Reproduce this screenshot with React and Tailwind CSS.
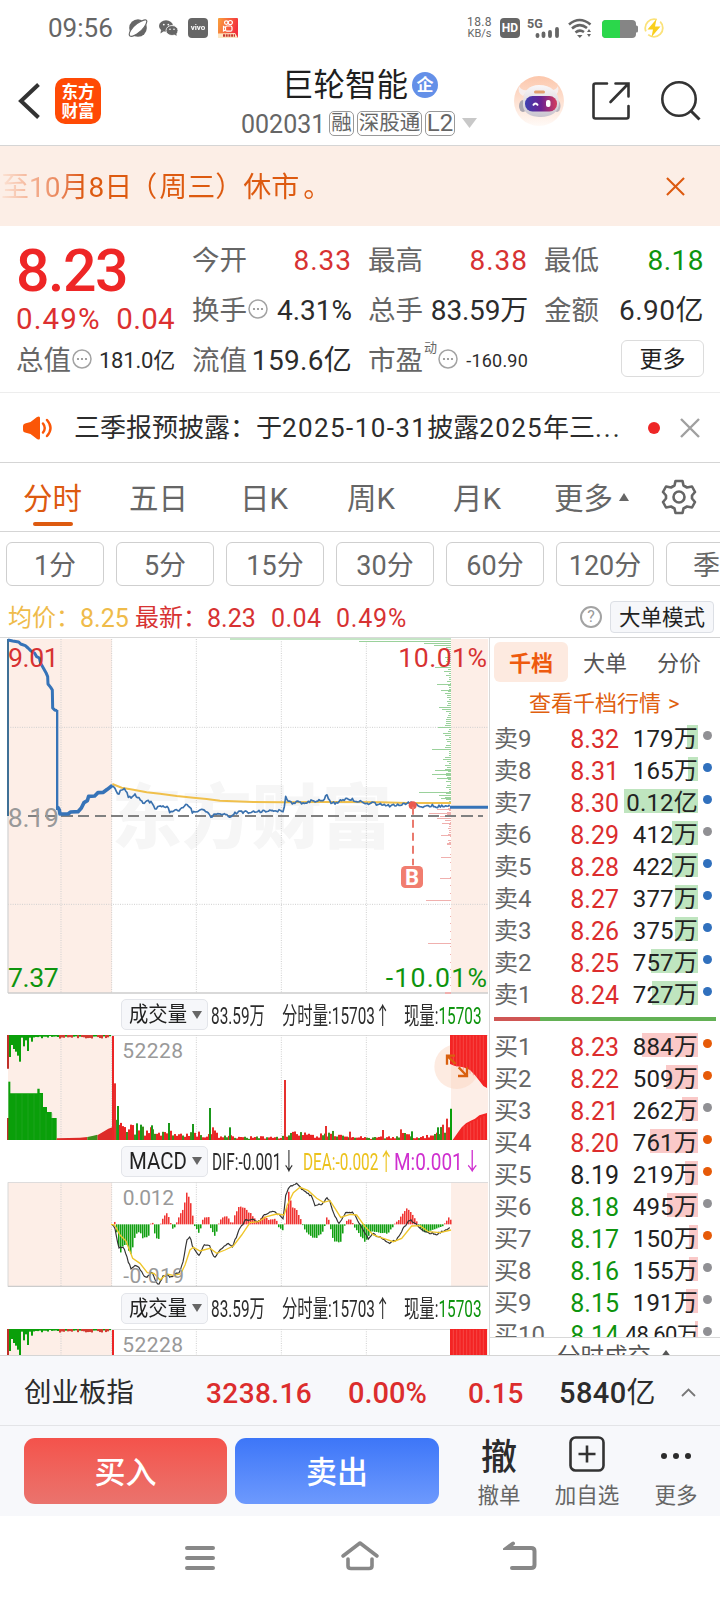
import React from 'react';
import clsx from 'clsx';

const SELL = [
  ['卖9', '8.32', '179万', 11, 'gray'],
  ['卖8', '8.31', '165万', 10, 'blue'],
  ['卖7', '8.30', '0.12亿', 74, 'blue'],
  ['卖6', '8.29', '412万', 26, 'gray'],
  ['卖5', '8.28', '422万', 26, 'blue'],
  ['卖4', '8.27', '377万', 23, 'blue'],
  ['卖3', '8.26', '375万', 23, 'blue'],
  ['卖2', '8.25', '757万', 47, 'blue'],
  ['卖1', '8.24', '727万', 46, 'blue'],
];

const BUY = [
  ['买1', '8.23', '884万', 56, 'orange'],
  ['买2', '8.22', '509万', 32, 'orange'],
  ['买3', '8.21', '262万', 16, 'gray'],
  ['买4', '8.20', '761万', 48, 'orange'],
  ['买5', '8.19', '219万', 13, 'orange'],
  ['买6', '8.18', '495万', 31, 'gray'],
  ['买7', '8.17', '150万', 9, 'orange'],
  ['买8', '8.16', '155万', 9, 'gray'],
  ['买9', '8.15', '191万', 12, 'gray'],
  ['买10', '8.14', '48.60万', 3, 'gray'],
];

const PERIODS = ['1分', '5分', '15分', '30分', '60分', '120分', '季K'];

const DOTS = { gray: 'bg-[#909094]', blue: 'bg-[#3070bd]', orange: 'bg-[#e65a08]' };

// deterministic jitter in 0..1
const noise = (i) => {
  const v = Math.sin(i * 12.9898 + 4.1) * 43758.5453;
  return v - Math.floor(v);
};

// linear interpolation over [x, y] knots
const at = (knots, x) => {
  for (let i = 1; i < knots.length; i++) {
    const [x0, y0] = knots[i - 1];
    const [x1, y1] = knots[i];
    if (x <= x1) return y0 + ((y1 - y0) * (x - x0)) / (x1 - x0);
  }
  return knots[knots.length - 1][1];
};

const wiggle = (knots, amp) => {
  const pts = [];
  for (let x = knots[0][0]; x <= knots[knots.length - 1][0]; x += 4) {
    pts.push(`${x},${(at(knots, x) + (noise(x) - 0.5) * amp).toFixed(1)}`);
  }
  return pts.join(' ');
};

const AUCTION =
  'M24,30 38,33 56,36 62,42 76,47 84,54 92,62 104,70 110,80 118,84 122,100 130,114 138,128 143,140 144,162 152,172 157,180 158,234 164,240 171,242';
const AUCTION_TAIL =
  'M172,530 178,540 180,552 204,552 212,546 234,545 244,534 252,518 262,512 266,499 284,498 294,488 310,487 322,478 337,466';

const PRICE = [
  [337, 464], [344, 472], [355, 497], [364, 480], [374, 480], [388, 504], [405, 494], [428, 516], [452, 514],
  [466, 536], [486, 526], [500, 530], [510, 545], [540, 540], [558, 519], [580, 549], [605, 540], [625, 548],
  [632, 562], [650, 553], [680, 552], [692, 562], [710, 547], [760, 547], [790, 542], [852, 542], [855, 496],
  [862, 510], [875, 521], [890, 514], [915, 520], [935, 513], [970, 512], [979, 495], [992, 516], [1005, 521],
  [1020, 510], [1045, 506], [1072, 512], [1095, 520], [1125, 520], [1160, 528], [1190, 526], [1215, 519],
  [1240, 521], [1270, 529], [1290, 526], [1310, 530], [1350, 529],
];

const AVERAGE =
  'M337,462 365,473 400,479 440,487 480,491 530,498 580,503 620,507 660,512 700,514 760,516 850,517 950,516 1060,516 1140,517 1220,519 1353,519';

const DIF = [
  [337, 193], [344, 200], [356, 265], [370, 262], [392, 325], [410, 315], [425, 335], [440, 355], [455, 335],
  [475, 378], [490, 345], [515, 350], [540, 335], [550, 300], [560, 240], [570, 232], [580, 265], [598, 288],
  [612, 256], [628, 255], [643, 297], [660, 270], [685, 248], [697, 262], [715, 215], [735, 182], [755, 178],
  [775, 186], [795, 162], [822, 153], [850, 175], [856, 110], [865, 85], [888, 69], [910, 90], [935, 110],
  [945, 135], [965, 134], [980, 115], [990, 122], [1000, 160], [1018, 190], [1035, 160], [1050, 155],
  [1065, 162], [1080, 195], [1105, 235], [1120, 222], [1145, 235], [1165, 250], [1190, 240], [1212, 200],
  [1230, 180], [1252, 195], [1275, 215], [1310, 223], [1350, 205],
];

const DEA =
  'M333,193 344,195 360,225 378,243 398,295 420,310 442,338 462,340 480,360 500,342 520,346 542,342 555,315 570,270 580,262 600,273 630,265 650,280 675,270 700,258 725,225 750,188 775,185 800,170 830,162 852,165 862,135 880,98 900,82 925,92 950,115 970,127 990,122 1005,145 1022,172 1050,163 1070,165 1095,200 1120,225 1150,235 1180,245 1205,235 1235,198 1260,197 1285,215 1320,218 1353,210';

const HIST = [
  [338, 0], [344, -8], [357, 94], [366, 68], [376, 60], [388, 94], [398, 62], [406, 28], [418, 22], [428, 46],
  [444, 36], [450, 0], [455, -8], [460, 20], [466, 44], [474, 44], [480, 0], [488, -20], [500, -36],
  [508, -10], [514, 14], [524, 6], [534, -20], [546, -44], [560, -112], [570, -66], [580, 0], [596, 28],
  [608, -22], [626, -20], [630, 10], [644, 38], [652, 4], [662, -18], [680, -26], [694, 4], [704, -36],
  [716, -56], [736, -48], [752, -30], [770, -6], [790, -26], [804, -12], [826, -16], [832, 6], [850, 20],
  [856, -40], [864, -106], [874, -50], [888, -44], [904, -4], [916, 22], [945, 46], [968, 20], [980, -30],
  [990, 14], [1000, 56], [1020, 52], [1034, -6], [1048, -18], [1060, 6], [1094, 56], [1112, 20], [1160, 28],
  [1180, 2], [1194, -12], [1218, -50], [1236, -30], [1250, -4], [1270, 26], [1300, 14], [1330, 2], [1346, -22],
  [1353, -6],
];

const VOLUME = [
  [348, 70], [362, 44], [380, 36], [410, 40], [440, 34], [460, 28], [480, 20], [520, 24], [545, 14], [560, 28],
  [600, 24], [620, 12], [640, 30], [665, 8], [690, 24], [700, 10], [840, 8], [850, 20], [900, 20], [940, 12],
  [970, 22], [990, 26], [1010, 13], [1050, 18], [1080, 9], [1190, 9], [1215, 26], [1230, 11], [1300, 16],
  [1340, 44], [1353, 4],
];

const SPIKES = [
  [345, 170, 'r'], [354, 102, 'g'], [411, 50, 'g'], [423, 46, 'g'], [456, 44, 'g'], [507, 51, 'g'],
  [579, 48, 'g'], [630, 96, 'g'], [639, 38, 'r'], [690, 38, 'g'], [855, 180, 'r'], [978, 42, 'r'],
  [1050, 25, 'r'], [1149, 30, 'r'], [1203, 32, 'r'], [1236, 26, 'g'], [1314, 38, 'g'], [1329, 46, 'r'],
  [1341, 64, 'r'],
];

// order-book depth ticks, [y, left edge]
const DEPTH = [
  [33, 1078], [40, 1272], [46, 1302], [111, 1306], [123, 1332], [162, 1310], [180, 1322], [233, 1317],
  [239, 1325], [292, 1314], [310, 1330], [357, 1296], [388, 1330], [422, 1305], [434, 1297], [446, 1310],
  [488, 1256], [496, 1318], [504, 1322],
];
const BID = [
  [537, 1310], [550, 1288], [558, 1320], [565, 1312], [572, 1334], [580, 1326], [616, 1324], [640, 1342],
  [681, 1322], [745, 1321], [810, 1279], [939, 1284],
];

function Grid({ top, bottom }) {
  return (
    <g stroke="#cfcfcf" strokeWidth="3" strokeDasharray="3 4">
      {[183, 335, 589, 844, 1099].map((x) => (
        <line key={x} x1={x} x2={x} y1={top} y2={bottom} />
      ))}
    </g>
  );
}

function PriceChart() {
  return (
    <svg className="block h-[357px] w-[489px]" viewBox="0 21 1467 1071" fontFamily="Roboto">
      <rect x="24" y="27" width="312" height="1062" fill="#fdeee7" />
      <rect x="1353" y="27" width="111" height="1062" fill="#fdeee7" />
      <text x="335" y="640" fontSize="210" fontWeight="900" fill="#f6f6f6" fontFamily="Noto Sans CJK SC" textLength="840">
        东方财富
      </text>
      <Grid top={27} bottom={1089} />
      <g stroke="#cfcfcf" strokeWidth="3" strokeDasharray="3 4">
        <line x1="24" x2="1464" y1="292" y2="292" />
        <line x1="24" x2="1464" y1="823" y2="823" />
      </g>
      <path d="M24,27 V1089" stroke="#d6d6d6" strokeWidth="4" />
      <path d="M24,1089 H1464" stroke="#cccccc" strokeWidth="5" />
      <path d="M0,22 H1467" stroke="#d2d2d2" strokeWidth="3" />
      <rect x="690" y="24" width="663" height="6" fill="#c5e5c6" />
      <g stroke="#9ad19b" strokeWidth="3" shapeRendering="crispEdges">
        {Array.from({ length: 80 }, (_, i) => (
          <line key={i} x1={1353 - 3 - noise(i) * 15} x2="1353" y1={40.5 + i * 6} y2={40.5 + i * 6} />
        ))}
        {DEPTH.map(([y, x]) => (
          <line key={y} x1={x} x2="1353" y1={y} y2={y} />
        ))}
      </g>
      <g stroke="#f0b0ae" strokeWidth="3" shapeRendering="crispEdges">
        {Array.from({ length: 20 }, (_, i) => (
          <line key={i} x1={1353 - 1 - noise(i + 90) * 11} x2="1353" y1={529.5 + i * 6} y2={529.5 + i * 6} />
        ))}
        {BID.map(([y, x]) => (
          <line key={y} x1={x} x2="1353" y1={y} y2={y} />
        ))}
        <path d="M1352,650 V1085" strokeDasharray="3 20" />
        <path d="M1335,1089 H1353" strokeWidth="5" />
      </g>
      <path d="M84,558 H1450" stroke="#808080" strokeWidth="6" strokeDasharray="34 16" shapeRendering="crispEdges" />
      <path d="M24,27 V558" stroke="#3f7096" strokeWidth="6" />
      <path d={AVERAGE} fill="none" stroke="#f0c04c" strokeWidth="6" />
      <path d={AUCTION} fill="none" stroke="#3673b8" strokeWidth="9" strokeLinejoin="round" />
      <path d="M171.500,240 V540" stroke="#3673b8" strokeWidth="7" />
      <path d={AUCTION_TAIL} fill="none" stroke="#3673b8" strokeWidth="11" strokeLinejoin="round" />
      <polyline points={wiggle(PRICE, 9)} fill="none" stroke="#3a71ae" strokeWidth="5" strokeLinejoin="round" />
      <path d="M1350,532 H1464" stroke="#3673b8" strokeWidth="9" />
      <circle cx="1238" cy="526" r="12" fill="#ea5a50" />
      <path d="M1239,530 V706" stroke="#ea7a6e" strokeWidth="6" strokeDasharray="24 15" />
      <rect x="1203" y="708" width="66" height="66" rx="13" fill="#f17d6f" />
      <text x="1236" y="764" fontSize="66" fontWeight="700" fill="#fff" textAnchor="middle">B</text>
      <g fontSize="80">
        <text x="24" y="110" fill="#d73232" textLength="152">9.01</text>
        <text x="1461" y="110" fill="#d73232" textAnchor="end" textLength="266">10.01%</text>
        <text x="23" y="590" fill="#999" textLength="154">8.19</text>
        <text x="24" y="1070" fill="#0e940e" textLength="152">7.37</text>
        <text x="1461" y="1070" fill="#0e940e" textAnchor="end" textLength="304">-10.01%</text>
      </g>
    </svg>
  );
}

function VolumeChart({ clipped = false }) {
  const bars = [];
  for (let x = 348; x < 1345; x += 6) {
    const h = at(VOLUME, x) * (0.35 + noise(x) * 0.95);
    bars.push(<rect key={x} x={x} y={450 - h} width="6" height={h} fill={noise(x + 7) > 0.68 ? '#3d8f1d' : '#ea2525'} />);
  }
  const hang = [];
  for (let i = 0; i < 51; i++) {
    const h = i < 6 ? [66, 30, 42, 50, 62, 80][i] : i < 12 ? [8, 34, 16, 48, 8, 20][i - 6] : 3 + noise(i) * 8;
    hang.push(<rect key={i} x={27 + i * 6} y="135" width="6" height={h} fill={i > 24 && noise(i) > 0.3 ? '#d23a30' : '#0a9f0a'} />);
  }
  return (
    <svg
      className={clsx('block w-[489px]', clipped ? 'h-[26px]' : 'h-[105px]')}
      viewBox={clipped ? '0 135 1467 78' : '0 135 1467 315'}
      fontFamily="Roboto"
    >
      <rect x="24" y="135" width="312" height="315" fill="#fdeee7" />
      <rect x="1353" y="135" width="111" height="315" fill="#fdeee7" />
      <Grid top={135} bottom={450} />
      <path d="M24,136 H1464" stroke="#d8d8d8" strokeWidth="3" />
      <path d="M24,450 H1464" stroke="#d8d8d8" strokeWidth="3" />
      <path d="M24,135 V236 M24,384 V450" stroke="#c0302a" strokeWidth="6" />
      <path d="M28,275 V450" stroke="#0a9f0a" strokeWidth="6" />
      {hang}
      <path d="M30,450 V310 H112 V296 H119 V309 H129 V351 H141 V366 H155 V384 H170 V450 Z" fill="#0a9f0a" />
      <g stroke="#44b044" strokeWidth="1">
        {[48, 66, 84, 102, 120, 138, 156].map((x) => (
          <line key={x} x1={x} x2={x} y1={x > 129 ? 370 : 312} y2="450" />
        ))}
      </g>
      <path d="M170,450 V445 L240,443 262,441 V450 Z M292,450 V436 L310,425 325,416 337,412 V450 Z" fill="#dd2b28" />
      <path d="M262,450 V441 L280,437 292,434 V450 Z" fill="#3d8f1d" />
      <path d="M339,138 V450" stroke="#ec2526" strokeWidth="6" />
      {bars}
      {SPIKES.map(([x, h, c]) => (
        <rect key={x} x={x - 3} y={450 - h} width="6" height={h} fill={c === 'r' ? '#e6302e' : '#1a981a'} />
      ))}
      <path d="M1353,356 V450" stroke="#0a9f0a" strokeWidth="6" />
      {!clipped && <circle cx="1370" cy="230" r="67" fill="#fbd3bc" opacity="0.45" />}
      <path d="M1350,135 H1461 V294 L1450,288 1438,272 1425,256 1410,240 1390,232 1365,228 1350,222 Z" fill="#f32424" />
      <path d="M1358,450 1372,430 1385,412 1398,400 1412,392 1425,386 1438,376 1461,369 V450 Z" fill="#f32424" />
      <g stroke="#f76b64" strokeWidth="1.5">
        {Array.from({ length: 10 }, (_, i) => (
          <line key={i} x1={1360 + i * 10} x2={1360 + i * 10} y1="137" y2={226 + i * 5} />
        ))}
        {Array.from({ length: 7 }, (_, i) => (
          <line key={i} x1={1392 + i * 10} x2={1392 + i * 10} y1={408 - i * 5} y2="450" />
        ))}
      </g>
      {!clipped && (
        <path d="M1341,224 V197 H1365 M1341,197 L1367,222 M1376,232 L1401,258 M1401,232 V258 H1374" fill="none" stroke="#d9600f" strokeWidth="7" />
      )}
      <text x="367" y="204" fontSize="63" fill="#999" textLength="182">52228</text>
    </svg>
  );
}

function MacdChart() {
  const bars = [];
  for (let x = 342; x < 1354; x += 6) {
    const raw = at(HIST, x);
    const h = Math.abs(raw) * (0.85 + noise(x) * 0.15) + 2;
    bars.push(
      <rect key={x} x={x} y={raw > 0 ? 193 : 193 - h} width="4.6" height={h} fill={raw > 0 ? '#12a012' : '#f03432'} />
    );
  }
  return (
    <svg className="block h-[105px] w-[489px]" viewBox="0 66 1467 315" fontFamily="Roboto">
      <rect x="24" y="67" width="312" height="313" fill="#fdeee7" />
      <rect x="1353" y="67" width="111" height="313" fill="#fdeee7" />
      <Grid top={67} bottom={380} />
      <path d="M24,67 H1464 M24,67 V380" fill="none" stroke="#d8d8d8" strokeWidth="3" />
      <path d="M24,379 H1464" stroke="#cccccc" strokeWidth="4" />
      {bars}
      <polyline points={wiggle(DIF, 6)} fill="none" stroke="#333" strokeWidth="3.5" />
      <path d={DEA} fill="none" stroke="#efc62a" strokeWidth="4" />
      <g fontSize="63" fill="#999">
        <text x="368" y="134" textLength="154">0.012</text>
        <text x="370" y="368" textLength="182">-0.019</text>
      </g>
    </svg>
  );
}

function More() {
  return (
    <svg className="-mt-1 size-5 shrink-0" viewBox="0 0 20 20">
      <circle cx="10" cy="10" r="9" fill="none" stroke="#a3a3a3" strokeWidth="1.5" />
      <circle cx="6" cy="10" r="1.1" fill="#8a8a8a" />
      <circle cx="10" cy="10" r="1.1" fill="#8a8a8a" />
      <circle cx="14" cy="10" r="1.1" fill="#8a8a8a" />
    </svg>
  );
}

function Triangle({ className, up = false }) {
  return (
    <svg className={className} viewBox="0 0 10 8" preserveAspectRatio="none">
      <path d={up ? 'M5 0 10 8H0Z' : 'M0 0H10L5 8Z'} fill="currentColor" />
    </svg>
  );
}

function IndicatorBar({ name, narrow = false, children }) {
  return (
    <div className="flex items-center pl-[121px]">
      <div className="flex h-[31px] w-[87px] shrink-0 items-center justify-between rounded-[5px] border border-[#e3e5ea] bg-[#f6f7fa] pl-[7px] pr-[5px]">
        <span className="w-[58px] whitespace-nowrap">
          <span
            className={clsx(
              'inline-block origin-left text-[#222]',
              narrow ? 'scale-x-[0.85] text-[24px]' : 'scale-x-[0.92] text-[21px]'
            )}
          >
            {name}
          </span>
        </span>
        <Triangle className="h-2 w-[10px] text-[#666]" />
      </div>
      {children}
    </div>
  );
}

function Narrow({ className, wide = false, children }) {
  return (
    <span className={clsx('shrink-0 whitespace-nowrap pt-0.5 text-[24px] text-[#2c2c2c]', className)}>
      <span className={clsx('inline-block origin-left', wide ? 'scale-x-[0.79]' : 'scale-x-[0.64]')}>{children}</span>
    </span>
  );
}

function VolumeBar() {
  return (
    <IndicatorBar name="成交量">
      <Narrow className="ml-[3px] w-[71px]">83.59万</Narrow>
      <Narrow className="w-[122px]">分时量:15703↑</Narrow>
      <Narrow className="w-[80px]">
        现量:<span className="text-[#0e940e]">15703</span>
      </Narrow>
    </IndicatorBar>
  );
}

function BookRow({ row, side }) {
  const [label, price, amount, width, dot] = row;
  const tone = price > '8.19' ? 'text-[#dc2d2d]' : price < '8.19' ? 'text-[#0e940e]' : 'text-[#222]';
  return (
    <div className="flex h-8 shrink-0 items-center pl-1">
      <span className="w-[53px] whitespace-nowrap pt-1 text-[24px] text-[#666]">{label}</span>
      <span className={clsx('w-[72px] pt-1 text-right text-[25px]', tone)}>{price}</span>
      <span className="relative flex h-6 w-[79px] items-center justify-end">
        <span
          className={clsx('absolute inset-y-0 right-0', side === 'sell' ? 'bg-[#bfe5bf]' : 'bg-[#fac9c8]')}
          style={{ width }}
        />
        <span
          className={clsx(
            'relative whitespace-nowrap pt-1 text-[#222]',
            amount.length > 5 ? 'text-[22px] tracking-[-0.7px]' : 'text-[24px] tracking-[0.2px]'
          )}
        >
          {amount}
        </span>
      </span>
      <span className={clsx('mb-1 ml-[5px] size-[9px] rounded-full', DOTS[dot])} />
    </div>
  );
}

function OrderBook() {
  return (
    <div className="flex h-[718px] w-[231px] flex-col overflow-hidden border-l border-[#d8d8d8] border-t border-t-[#d2d2d2]">
      <div className="ml-1 mt-1 flex h-10 items-center text-[22px] text-[#555]">
        <span className="flex h-10 w-[74px] items-center justify-center rounded-md bg-[#fdeae0] pt-1 font-bold text-[#ee5a0e]">千档</span>
        <span className="w-[74px] pt-1 text-center">大单</span>
        <span className="w-[74px] pt-1 text-center">分价</span>
      </div>
      <div className="flex h-[39px] items-center pl-[39px] pt-1 text-[22px] text-[#e0600f]">
        查看千档行情<span className="ml-[7px]">&gt;</span>
      </div>
      {SELL.map((row) => (
        <BookRow key={row[0]} row={row} side="sell" />
      ))}
      <div className="mb-2 ml-1 mt-2 flex h-1 w-[222px] shrink-0 bg-[#63b155]">
        <div className="w-[46px] bg-[#cf5654]" />
      </div>
      <div className="flex h-[308px] shrink-0 flex-col overflow-hidden">
        {BUY.map((row) => (
          <BookRow key={row[0]} row={row} side="buy" />
        ))}
      </div>
      <div className="flex h-[18px] shrink-0 items-start gap-[9px] overflow-hidden border-t border-[#d8d8d8] pl-[67px] pt-[8px] text-[23.500px] leading-none text-[#555]">
        分时成交
        <Triangle up className="mt-1 h-2 w-[12px]" />
      </div>
    </div>
  );
}

function StatusBar() {
  return (
    <div className="flex h-[56px] items-center pl-[48px] text-[#666]">
      <span className="w-[80px] text-[26px]">09:56</span>
      <svg className="mr-[11px] size-5" viewBox="0 0 20 20">
        <circle cx="10" cy="10" r="8.8" fill="#666" />
        <ellipse cx="10" cy="10" rx="11" ry="4.2" transform="rotate(-42 10 10)" fill="#fff" />
        <path d="M2 18C-.5 16 4 9 9 5.500S19 .5 18.800 3.500 15 11.500 11 14.500 3.500 19 2 18Z" fill="none" stroke="#666" strokeWidth="1.200" />
      </svg>
      <svg className="mr-[10px] h-4 w-[19px]" viewBox="0 0 19 16">
        <ellipse cx="7" cy="6" rx="7" ry="5.800" fill="#666" />
        <path d="M2 10 1.500 13.500 5 11Z" fill="#666" />
        <ellipse cx="13" cy="10.500" rx="6" ry="5" fill="#666" stroke="#fff" strokeWidth="0.800" />
        <path d="M15 14 17.500 16V13Z" fill="#666" />
        <g fill="#fff">
          <circle cx="4.800" cy="4.600" r="0.900" />
          <circle cx="9.300" cy="4.600" r="0.900" />
          <circle cx="11" cy="9.300" r="0.800" />
          <circle cx="15" cy="9.300" r="0.800" />
        </g>
      </svg>
      <span className="mr-[10px] flex size-5 items-center justify-center rounded-[4px] bg-[#666] text-[8px] font-bold leading-none text-white">
        <span className="scale-y-[0.8]">vivo</span>
      </span>
      <svg className="size-5" viewBox="0 0 20 20">
        <defs>
          <linearGradient id="ks" x1="0" y1="0" x2="1" y2="0.300">
            <stop offset="0" stopColor="#f9a23c" />
            <stop offset="1" stopColor="#f4313e" />
          </linearGradient>
        </defs>
        <rect width="20" height="20" rx="1" fill="url(#ks)" />
        <g fill="none" stroke="#fff" strokeWidth="1.200">
          <circle cx="8.300" cy="4.600" r="1.800" />
          <circle cx="12.300" cy="4.600" r="2.100" />
          <rect x="7.500" y="8" width="6.500" height="5.200" rx="1.500" />
          <path d="M7.500 9.500 5.500 8.500V13L7.500 12" />
        </g>
        <path d="M0 15.500 17 15 20 20H0Z" fill="#fde6c4" />
        <path d="M5 17.500H17" stroke="#c7372c" strokeWidth="2.500" strokeDasharray="2 0.700" />
      </svg>
      <div className="ml-[226px] flex w-[31px] flex-col items-center text-[12px] leading-[11px]">
        <span className="tracking-[0.4px]">18.8</span>
        <span className="text-[11px]">KB/s</span>
      </div>
      <span className="ml-[5px] flex size-5 items-center justify-center rounded-[4px] bg-[#666] text-[12px] font-bold leading-none text-white">HD</span>
      <svg className="ml-[7px] h-5 w-[34px] overflow-visible" viewBox="0 0 34 20" fontFamily="Roboto">
        <text x="0" y="9.500" fontSize="12.500" fontWeight="700" fill="#666">5G</text>
        <g stroke="#666" strokeWidth="3.800" strokeLinecap="round">
          <path d="M10.500 17V18M16.500 15.500V18M23 14V18M30 11V18" />
        </g>
      </svg>
      <svg className="ml-[7px] h-5 w-6" viewBox="0 0 24 20" fill="none" stroke="#666" strokeWidth="2.600">
        <path d="M1 6.500Q11.500-2.500 22.500 6.500M4 10.500Q11.500 4 19 10M7.500 14.500Q11.500 11 16 14" />
        <path d="M9 17 11.800 20 14.500 17Z" fill="#666" stroke="none" />
        <path d="M19 14 21 11 23 14ZM19 16 21 19 23 16Z" fill="#666" stroke="none" />
      </svg>
      <svg className="ml-[10px] mt-0.5 h-[18px] w-9" viewBox="0 0 36 18">
        <rect x="32" y="5.500" width="4" height="7" rx="1.500" fill="#858585" />
        <rect width="34" height="18" rx="4" fill="#858585" />
        <path d="M4 0H18V18H4A4 4 0 0 1 0 14V4A4 4 0 0 1 4 0Z" fill="#2bd74b" />
      </svg>
      <svg className="ml-[6px] size-5" viewBox="0 0 20 20">
        <circle cx="10" cy="10" r="8.800" fill="none" stroke="#fbe27a" strokeWidth="1.800" strokeDasharray="20 4" />
        <path d="M12.500 1 3.500 11.500H9L7.500 19 16.500 8.500H11Z" fill="#f9cf1c" />
      </svg>
    </div>
  );
}

function Tag({ className, children }) {
  return (
    <span className={clsx('flex h-[25px] shrink-0 items-center justify-center rounded-[5px] border-[1.5px] border-[#999] leading-none', className)}>
      {children}
    </span>
  );
}

function Header() {
  return (
    <div className="flex h-[90px] items-center border-b border-[#d5d5d5]">
      <svg className="ml-[18px] mt-px h-9 w-[22px]" viewBox="0 0 22 36" fill="none" stroke="#333" strokeWidth="4">
        <path d="M20.500 1.500 3 18 20.500 34.500" />
      </svg>
      <div className="ml-[15px] flex size-[46px] flex-col items-center justify-center rounded-[10px] bg-[#ff4a05] pt-0.5 text-[16.500px] font-bold leading-[19px] text-white">
        <span>东方</span>
        <span>财富</span>
      </div>
      <div className="ml-[135px] flex w-[245px] flex-col items-center pt-[5px]">
        <div className="ml-[3px] flex items-center">
          <span className="text-[31.500px] leading-[40px] text-[#1f1f1f]">巨轮智能</span>
          <span className="mb-[2px] ml-[4px] flex size-[26px] items-center justify-center rounded-full bg-[#6490e8] text-[17px] font-bold leading-none text-white">企</span>
        </div>
        <div className="ml-[10px] flex h-[34px] w-full items-center gap-[3px] text-[20.500px] text-[#666]">
          <span className="mr-px w-[84px] pt-0.5 text-[25px]">002031</span>
          <Tag className="w-[25px]">融</Tag>
          <Tag className="w-[65px]">深股通</Tag>
          <Tag className="w-[30px] text-[24px]">L2</Tag>
          <Triangle className="ml-[4px] h-[10px] w-[15px] shrink-0 text-[#c8c8c8]" />
        </div>
      </div>
      <svg className="ml-[33px] size-[50px]" viewBox="0 0 50 50">
        <defs>
          <linearGradient id="halo" x1="0" y1="0" x2="0" y2="1">
            <stop offset="0" stopColor="#fcc7ac" />
            <stop offset="1" stopColor="#fffaf7" />
          </linearGradient>
          <linearGradient id="shell" x1="0" y1="0" x2="0" y2="1">
            <stop offset="0" stopColor="#faf7f8" />
            <stop offset="1" stopColor="#c9c5cf" />
          </linearGradient>
          <linearGradient id="visor" x1="0" y1="0" x2="1" y2="0">
            <stop offset="0" stopColor="#3c3fb0" />
            <stop offset="0.500" stopColor="#6a2292" />
            <stop offset="1" stopColor="#d43b5c" />
          </linearGradient>
        </defs>
        <circle cx="25" cy="25" r="25" fill="url(#halo)" />
        <path d="M9 20Q3 17 5 10 7 15 14 14ZM40 20Q46 17 44 10 42 15 35 14Z" fill="#f6eeee" />
        <ellipse cx="9" cy="30" rx="4" ry="6" fill="#aaa6b0" />
        <ellipse cx="43" cy="30" rx="3.500" ry="6" fill="#b9b5be" />
        <path d="M25 9C37 9 45 16 45 27 45 36 37 41 27 41S8 37 9 27C9 15 15 9 25 9Z" fill="url(#shell)" />
        <rect x="20" y="14.500" width="11" height="3" rx="1.500" fill="#e2a070" />
        <rect x="11" y="20" width="32" height="15.500" rx="7.500" fill="url(#visor)" />
        <path d="M19 29.500Q21.500 25.500 24 29.500" fill="none" stroke="#fff" strokeWidth="1.800" />
        <rect x="32" y="24" width="4.500" height="7" rx="2" fill="#fff" />
      </svg>
      <svg className="ml-7 size-[38px]" viewBox="0 0 38 38" fill="none" stroke="#333" strokeWidth="2.600" strokeLinecap="round">
        <path d="M15 1.500H3.500Q1.500 1.500 1.500 3.500V34.500Q1.500 36.500 3.500 36.500H34.500Q36.500 36.500 36.500 34.500V24M23.500 1.500H36.500V14.500M36 2 18.500 20" />
      </svg>
      <svg className="ml-[31px] size-[40px]" viewBox="0 0 40 40" fill="none" stroke="#333" strokeWidth="2.600">
        <circle cx="18" cy="18" r="16.700" />
        <path d="M29.500 29.500 38.500 38.500" strokeWidth="3" />
      </svg>
    </div>
  );
}

function Cross({ className, color, width }) {
  return (
    <svg className={className} viewBox="0 0 20 20" stroke={color} strokeWidth={width}>
      <path d="M1 1 19 19M19 1 1 19" />
    </svg>
  );
}

function Stat({ label, value, tone = 'text-[#2c2c2c]', more = false }) {
  return (
    <div className="flex h-[50px] items-center justify-between pt-1">
      <span className="flex items-center gap-px whitespace-nowrap text-[27.500px] text-[#666]">
        {label}
        {more && <More />}
      </span>
      <span className={clsx('whitespace-nowrap', tone)}>{value}</span>
    </div>
  );
}

function Quote() {
  return (
    <div className="flex h-[167px] border-b border-[#ededed] pl-[16px] pr-[15px] pt-2 text-[28px]">
      <div className="w-[159px]">
        <div className="flex h-[70px] items-center pt-[3px] text-[59px] font-medium tracking-[-1.5px] text-[#ee2626]">8.23</div>
        <div className="flex h-[30px] items-center justify-between pt-0.5 text-[29.500px] text-[#dc3030]">
          <span className="tracking-[1.1px]">0.49%</span>
          <span className="tracking-[0.3px]">0.04</span>
        </div>
        <Stat label="总值" more value="181.0亿" tone="text-[#2c2c2c] text-[22px] tracking-[-0.2px]" />
      </div>
      <div className="ml-[17px] w-[160px]">
        <Stat label="今开" value="8.33" tone="text-[#d73232] tracking-[1px]" />
        <Stat label="换手" more value="4.31%" />
        <Stat label="流值" value="159.6亿" tone="text-[#2c2c2c] tracking-[0.3px]" />
      </div>
      <div className="ml-[16px] w-[160px]">
        <Stat label="最高" value="8.38" tone="text-[#d73232] tracking-[1px]" />
        <Stat label="总手" value="83.59万" tone="text-[#2c2c2c] tracking-[-0.2px]" />
        <Stat
          label={
            <>
              市盈<span className="mb-7 text-[13px]">动</span>
            </>
          }
          more
          value="-160.90"
          tone="text-[#2c2c2c] text-[18px] tracking-[0.2px]"
        />
      </div>
      <div className="ml-[16px] w-[160px]">
        <Stat label="最低" value="8.18" tone="text-[#0e940e] tracking-[0.5px]" />
        <Stat label="金额" value="6.90亿" tone="text-[#2c2c2c] tracking-[0.5px]" />
        <div className="ml-auto mt-[6px] flex h-[37px] w-[83px] items-center justify-center rounded-md border border-[#dcdcdc] pt-0.5 text-[23px] text-[#222]">更多</div>
      </div>
    </div>
  );
}

function Tabs() {
  return (
    <div className="flex h-[69px] items-center border-b border-[#d5d5d5] pl-[23px] text-[29.500px] text-[#666]">
      <span className="flex h-full w-[106px] flex-col pt-[22px] text-[#dd5a10]">
        分时
        <span className="ml-[10px] mt-[7px] h-1 w-10 rounded-full bg-[#dd5a10]" />
      </span>
      <span className="w-[111px] pt-1.5">五日</span>
      <span className="w-[107px] pt-1.5">日K</span>
      <span className="w-[106px] pt-1.5">周K</span>
      <span className="w-[101px] pt-1.5">月K</span>
      <span className="w-[59px] whitespace-nowrap pt-1.5">更多</span>
      <Triangle up className="ml-[6px] h-2 w-[10px]" />
      <svg className="ml-[32px] size-[36px]" viewBox="0 0 36 36" fill="none" stroke="#666" strokeWidth="2.600" strokeLinejoin="round">
        <path d="M14.500 2H21.500L22.500 6.500 26 8.500 31 7.500 34 13 31 16.500V19.500L34 23 31 28.500 26 27.500 22.500 29.500 21.500 34H14.500L13.500 29.500 10 27.500 5 28.500 2 23 5 19.500V16.500L2 13 5 7.500 10 8.500 13.500 6.500Z" />
        <circle cx="18" cy="18" r="5.500" />
      </svg>
    </div>
  );
}

function Footer() {
  return (
    <div className="h-[161px] border-t border-[#d5d5d5] bg-[#f7f8fb]">
      <div className="flex h-[70px] items-center border-b border-[#e3e4e7] pl-6 pt-1 text-[28px] font-medium text-[#dc2d2d]">
        <span className="w-[182px] text-[27.500px] font-normal text-[#2c2c2c]">创业板指</span>
        <span className="w-[142px] pt-0.5 tracking-[0.4px]">3238.16</span>
        <span className="w-[120px] pt-0.5 text-[29px]">0.00%</span>
        <span className="w-[91px] pt-0.5">0.15</span>
        <span className="w-[122px] whitespace-nowrap pt-0.5 text-[29px] tracking-[0.4px] text-[#2c2c2c]">5840<span className="font-normal">亿</span></span>
        <svg className="h-[9px] w-[15px]" viewBox="0 0 15 9" fill="none" stroke="#777" strokeWidth="1.800">
          <path d="M1 8 7.500 1.500 14 8" />
        </svg>
      </div>
      <div className="flex pl-6 pt-3">
        <div className="flex h-[66px] w-[203px] items-center justify-center rounded-[11px] bg-linear-to-b from-[#f4524b] to-[#ea736d] pt-0.5 text-[31px] font-medium text-white">买入</div>
        <div className="ml-2 flex h-[66px] w-[204px] items-center justify-center rounded-[11px] bg-linear-to-b from-[#3d76f8] to-[#6d99fd] pt-0.5 text-[31px] font-medium text-white">卖出</div>
        <div className="ml-[26px] flex text-[21.500px] leading-none text-[#666]">
          <div className="flex w-[68px] flex-col items-center">
            <span className="flex h-[47px] items-center pb-2 text-[36px] font-medium leading-none text-[#2c2c2c]">撤</span>
            <span>撤单</span>
          </div>
          <div className="flex w-[108px] flex-col items-center">
            <svg className="mb-[13px] mt-[-2px] size-9" viewBox="0 0 36 36" fill="none" stroke="#333" strokeWidth="2.600">
              <rect x="1.500" y="1.500" width="33" height="33" rx="5" />
              <path d="M18 9.500V26.500M9.500 18H26.500" />
            </svg>
            <span>加自选</span>
          </div>
          <div className="flex w-[70px] flex-col items-center">
            <svg className="mb-[13px] mt-[-2px] h-9 w-[32px]" viewBox="0 0 32 36" fill="#2c2c2c">
              <circle cx="4" cy="20" r="3" />
              <circle cx="16" cy="20" r="3" />
              <circle cx="28" cy="20" r="3" />
            </svg>
            <span>更多</span>
          </div>
        </div>
      </div>
    </div>
  );
}

function NavBar() {
  return (
    <div className="flex h-[84px] items-start pl-[184px] pt-6">
      <svg className="h-8 w-8" viewBox="0 0 32 32" stroke="#888" strokeWidth="4" strokeLinecap="round">
        <path d="M3 8H29M3 18H29M3 28H29" />
      </svg>
      <svg className="ml-[124px] h-8 w-10" viewBox="0 0 40 32" fill="none" stroke="#888" strokeWidth="3.600" strokeLinecap="round" strokeLinejoin="round">
        <path d="M3 16 20 3 37 16M8 19V26Q8 28.500 11 28.500H29Q32 28.500 32 26V19" />
      </svg>
      <svg className="ml-[123px] h-8 w-9" viewBox="0 0 36 32" fill="none" stroke="#888" strokeWidth="4" strokeLinecap="round">
        <path d="M10 3.500 4 8H28Q31.500 8 31.500 11V25Q31.500 28 28 28H9" />
      </svg>
    </div>
  );
}

export default function App() {
  return (
    <div className="h-[1600px] w-[720px] overflow-hidden bg-white font-['Roboto','Noto_Sans_CJK_SC',sans-serif] leading-none">
      <StatusBar />
      <Header />

      {/* Market notice */}
      <div className="flex h-20 items-center justify-between bg-[#fceee6] pl-px pr-[35px] text-[28px]">
        <span className="whitespace-nowrap bg-linear-to-r from-[#fbe3d5] via-[#dd5a10] via-25% to-[#dd5a10] bg-clip-text pt-1 leading-[40px] text-transparent">
          至10月8日<span className="-ml-[3px] mr-[2px]">（</span>周三<span>）</span>休市
          <span className="ml-[4px]">。</span>
        </span>
        <Cross className="size-[19px]" color="#dd5a10" width="2.200" />
      </div>

      <Quote />

      {/* Announcement */}
      <div className="flex h-[70px] items-center border-b border-[#d5d5d5] pl-[22px]">
        <svg className="h-6 w-[31px]" viewBox="0 0 31 24">
          <path d="M3 7.500 8.500 6 15 1Q18 -.5 18 2V22Q18 24.500 15 23L8.500 18 3 16.500Q1 16 1 14V10Q1 8 3 7.500Z" fill="#fb5607" />
          <path d="M21 7.500Q24.500 12 21 16.500M25 4Q32 12 25 20" fill="none" stroke="#fb5607" strokeWidth="2.400" strokeLinecap="round" />
        </svg>
        <span className="ml-[21px] w-[574px] whitespace-nowrap text-[26px] text-[#2c2c2c]">
          三季报预披露：于<span className="tracking-[1.4px]">2025-10-31</span>披露
          <span className="tracking-[1.3px]">2025</span>年三<span className="tracking-[2px]">...</span>
        </span>
        <span className="size-3 rounded-full bg-[#ee2626]" />
        <Cross className="ml-5 size-[20px]" color="#a0a0a0" width="2.400" />
      </div>

      <Tabs />

      <div className="flex h-[60px] items-center gap-3 overflow-hidden pl-[6px] pt-[3px] text-[27px] text-[#666]">
        {PERIODS.map((p) => (
          <span key={p} className="flex h-11 w-[98px] shrink-0 items-center justify-center rounded-md border border-[#cfcfcf] pt-1.5">
            {p}
          </span>
        ))}
      </div>

      <div className="flex h-[45px] items-center whitespace-nowrap pl-[8px] pt-[5px] text-[24px] text-[#d73232]">
        <span className="w-[72px] pt-0.5 text-[#efbb4a]">均价：</span>
        <span className="w-[55px] pt-0.5 text-[25px] text-[#efbb4a]">8.25</span>
        <span className="w-[72px] pt-0.5">最新：</span>
        <span className="w-[64px] pt-0.5 text-[25px]">8.23</span>
        <span className="w-[65px] pt-0.5 text-[25px] tracking-[0.4px]">0.04</span>
        <span className="w-[244px] pt-0.5 text-[25px] tracking-[0.8px]">0.49%</span>
        <span className="flex size-[22px] items-center justify-center rounded-full border-2 border-[#a3a3a3] text-[16px] text-[#999]">?</span>
        <span className="ml-2 flex h-8 w-[104px] items-center justify-center rounded-[4px] border border-[#dcdfe5] bg-[#f6f7fa] pt-0.5 text-[21.500px] text-[#222]">大单模式</span>
      </div>

      <div className="flex h-[718px]">
        <div className="w-[489px]">
          <PriceChart />
          <div className="grid h-[41px]">
            <VolumeBar />
          </div>
          <VolumeChart />
          <div className="grid h-[42px]">
            <IndicatorBar name="MACD" narrow>
              <Narrow className="ml-[4px] w-[91px]">DIF:-0.001↓</Narrow>
              <Narrow className="w-[91px]">
                <span className="text-[#ecc21c]">DEA:-0.002↑</span>
              </Narrow>
              <Narrow className="w-[83px]" wide>
                <span className="text-[#cf2fcf]">M:0.001↓</span>
              </Narrow>
            </IndicatorBar>
          </div>
          <MacdChart />
          <div className="grid h-[42px]">
            <VolumeBar />
          </div>
          <VolumeChart clipped />
        </div>
        <OrderBook />
      </div>

      <Footer />
      <NavBar />
    </div>
  );
}
